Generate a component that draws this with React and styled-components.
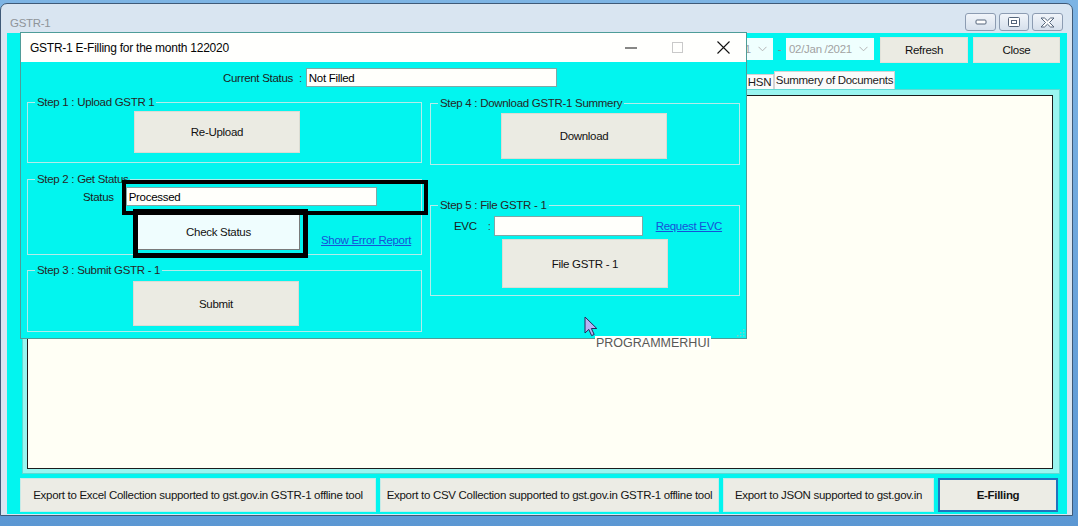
import React from "react";
import styled, { createGlobalStyle } from "styled-components";

const UI = `"Liberation Sans", Arial, sans-serif`;
const TIGHT = "-0.3px";

const GlobalStyle = createGlobalStyle`
  html, body {
    margin: 0;
    padding: 0;
  }
  body {
    width: 1078px;
    height: 526px;
    overflow: hidden;
    font-family: ${UI};
    font-size: 11.5px;
    letter-spacing: ${TIGHT};
    color: #1b1b1b;
    background: linear-gradient(180deg, #7db4e4 0%, #5b97d3 100%);
  }
`;

const Desktop = styled.div`
  position: relative;
  width: 1078px;
  height: 526px;
  padding-top: 3px;
  box-sizing: border-box;
`;

/* ---------- main window ---------- */

const MainWindow = styled.div`
  width: 1073px;
  height: 513px;
  box-sizing: border-box;
  border: 1px solid #3f5a78;
  border-radius: 7px 7px 0 0;
  background: #d9e5f1;
  display: flex;
  flex-direction: column;
`;

const TitleBar = styled.div`
  height: 29px;
  display: flex;
  align-items: flex-start;
  padding: 0 9px 0 9px;
`;

const WinTitle = styled.div`
  margin-top: 12px;
  font-size: 11.5px;
  line-height: 14px;
  color: #8f9499;
  flex: 1;
`;

const WinControls = styled.div`
  display: flex;
  gap: 3px;
  margin-top: 9px;
`;

const WinCtl = styled.div`
  width: ${(p) => p.$w}px;
  height: 18px;
  box-sizing: border-box;
  border: 1px solid #8c9cb2;
  border-radius: 3px;
  background: linear-gradient(180deg, #f1f5fa 0%, #d6e0ec 100%);
  display: flex;
  align-items: center;
  justify-content: center;
`;

const Client = styled.div`
  flex: 1;
  margin: 0 5px 1px 6px;
  background: #02f5ef;
  display: flex;
  flex-direction: column;
  padding: 4px 7px 2px 13px;
  min-height: 0;
`;

const TopRow = styled.div`
  height: 26px;
  display: flex;
  justify-content: flex-end;
  align-items: flex-start;
`;

const DatePicker = styled.div`
  width: 88px;
  height: 22px;
  margin-top: 1px;
  box-sizing: border-box;
  background: #effffe;
  color: #a2a2a2;
  white-space: nowrap;
  display: flex;
  align-items: center;
  justify-content: space-between;
  padding: 0 6px 0 3px;
`;

const Dash = styled.div`
  width: 13px;
  text-align: center;
  line-height: 24px;
  color: #8a8a8a;
`;

const ToolButton = styled.button`
  width: ${(p) => p.$w}px;
  height: 26px;
  margin-left: ${(p) => p.$ml}px;
  box-sizing: border-box;
  background: #ebebe3;
  border: 1px solid #e2e2da;
  font: 11.5px ${UI};
  letter-spacing: ${TIGHT};
  color: #111;
  padding: 0;
`;

const TabStrip = styled.div`
  height: 18px;
  margin-top: 8px;
  margin-left: 4px;
  display: flex;
  align-items: flex-end;
`;

const Tab = styled.div`
  width: ${(p) => p.$w}px;
  height: ${(p) => (p.$active ? 18 : 15)}px;
  box-sizing: border-box;
  background: #fbfbfb;
  border: 1px solid #d3d3d3;
  border-bottom: none;
  line-height: ${(p) => (p.$active ? 17 : 14)}px;
  text-align: center;
  white-space: nowrap;
  overflow: hidden;
  color: #1b1b1b;
`;

const Panel = styled.div`
  flex: 1;
  min-height: 0;
  margin-left: 2px;
  box-sizing: border-box;
  background: #9af5f0;
  border: 1px solid #5fdad3;
  padding: 5px 6px 4px 4px;
`;

const PanelBody = styled.div`
  height: 100%;
  box-sizing: border-box;
  background: #fffff5;
  border: 1px solid #1c1c1c;
`;

const BottomRow = styled.div`
  height: 34px;
  margin-top: 4px;
  margin-right: 2px;
  display: flex;
  gap: 4px;
`;

const ExportButton = styled.button`
  width: ${(p) => p.$w}px;
  height: 34px;
  box-sizing: border-box;
  background: #ececE5;
  border: ${(p) => (p.$primary ? "2px solid #2273bd" : "1px solid #c6ebe8")};
  font: ${(p) => (p.$primary ? "bold" : "normal")} 11.5px ${UI};
  letter-spacing: ${TIGHT};
  white-space: nowrap;
  color: #141414;
  padding: 0;
`;

/* ---------- dialog ---------- */

const Dialog = styled.div`
  position: absolute;
  left: 20px;
  top: 32px;
  width: 727px;
  height: 307px;
  box-sizing: border-box;
  border: 1px solid #4e9c98;
  background: #02f5ef;
  display: flex;
  flex-direction: column;
`;

const DialogTitle = styled.div`
  height: 29px;
  background: #fffffd;
  display: flex;
  align-items: center;
  padding-left: 9px;
`;

const DialogCaption = styled.div`
  flex: 1;
  font-size: 12px;
  letter-spacing: -0.25px;
  color: #050505;
`;

const DlgCtl = styled.div`
  width: 46px;
  height: 29px;
  display: flex;
  align-items: center;
  justify-content: center;
`;

const DialogBody = styled.div`
  flex: 1;
  position: relative;
  padding-top: 6px;
`;

const StatusLine = styled.div`
  height: 19px;
  display: flex;
  align-items: center;
  padding-left: ${(p) => p.$pl}px;
  margin-top: ${(p) => p.$mt || 0}px;
`;

const Label = styled.span`
  color: #1b1b1b;
  white-space: nowrap;
`;

const Colon = styled.span`
  margin-left: ${(p) => p.$ml}px;
  color: #444;
`;

const TextBox = styled.input`
  width: ${(p) => p.$w}px;
  height: ${(p) => p.$h || 19}px;
  margin: 0 0 0 ${(p) => p.$ml}px;
  box-sizing: border-box;
  border: 1px solid #7fa8a6;
  background: #fffffb;
  font: 11.5px ${UI};
  letter-spacing: ${TIGHT};
  color: #000;
  padding: 0 2px;
  outline: none;
`;

const Columns = styled.div`
  display: grid;
  grid-template-columns: 395px 310px;
  column-gap: 8px;
  margin: 8px 0 0 6px;
`;

const Column = styled.div`
  display: flex;
  flex-direction: column;
`;

const Group = styled.fieldset`
  box-sizing: border-box;
  height: ${(p) => p.$h}px;
  margin: ${(p) => p.$mt || 0}px 0 0 0;
  padding: 0;
  min-width: 0;
  border: 1px solid #b3ecea;
`;

const Legend = styled.legend`
  margin-left: 7px;
  padding: 0 2px;
  line-height: 14px;
  color: #262626;
`;

const ActionButton = styled.button`
  display: block;
  box-sizing: border-box;
  width: ${(p) => p.$w}px;
  height: ${(p) => p.$h}px;
  margin: ${(p) => p.$mt}px 0 0 ${(p) => p.$ml}px;
  background: ${(p) => (p.$focus ? "#effdfe" : "#ebebe3")};
  border: 1px solid ${(p) => (p.$focus ? "#7a7a7a" : "#dcdcd3")};
  font: 11.5px ${UI};
  letter-spacing: ${TIGHT};
  color: #111;
  padding: 0;
`;

const ButtonRow = styled.div`
  display: flex;
  align-items: flex-end;
`;

const Link = styled.a`
  margin: 0 0 ${(p) => p.$mb || 0}px ${(p) => p.$ml}px;
  color: #1652d8;
  text-decoration: underline;
  white-space: nowrap;
`;

const Grip = styled.svg`
  position: absolute;
  right: 1px;
  bottom: 1px;
`;

/* ---------- overlays ---------- */

const Marker = styled.div`
  position: absolute;
  left: ${(p) => p.$x}px;
  top: ${(p) => p.$y}px;
  width: ${(p) => p.$w}px;
  height: ${(p) => p.$h}px;
  box-sizing: border-box;
  border: ${(p) => p.$t}px solid #000;
`;

const Watermark = styled.div`
  position: absolute;
  left: 595px;
  top: 336px;
  padding: 0 1px;
  background: #fffffb;
  font: 12.5px ${UI};
  letter-spacing: 0;
  line-height: 14px;
  color: #585858;
`;

const Cursor = styled.svg`
  position: absolute;
  left: 584px;
  top: 316px;
`;

// tabs to the left of HSN sit under the dialog; only their frames are kept
const coveredTabs = [96, 92, 100, 104, 96, 92, 70, 71];

const Chevron = () => (
  <svg width="9" height="6" viewBox="0 0 9 6">
    <path d="M0.5 0.8 L4.5 4.8 L8.5 0.8" fill="none" stroke="#b4b4b4" strokeWidth="1" />
  </svg>
);

export default function App() {
  return (
    <>
      <GlobalStyle />
      <Desktop>
        <MainWindow>
          <TitleBar>
            <WinTitle>GSTR-1</WinTitle>
            <WinControls>
              <WinCtl $w={31}>
                <svg width="12" height="6" viewBox="0 0 12 6">
                  <rect x="1" y="1" width="10" height="4" rx="1" fill="#fff" stroke="#54657a" />
                </svg>
              </WinCtl>
              <WinCtl $w={30}>
                <svg width="12" height="10" viewBox="0 0 12 10">
                  <rect x="0.5" y="0.5" width="11" height="9" rx="1" fill="#fff" stroke="#54657a" />
                  <rect x="3.5" y="3.5" width="5" height="3" fill="none" stroke="#54657a" />
                </svg>
              </WinCtl>
              <WinCtl $w={31}>
                <svg width="15" height="11" viewBox="0 0 15 11">
                  <path
                    d="M1 1 H4.5 L7.5 3.8 L10.5 1 H14 L9.5 5.5 L14 10 H10.5 L7.5 7.2 L4.5 10 H1 L5.5 5.5 Z"
                    fill="#fff"
                    stroke="#54657a"
                    strokeWidth="1"
                    strokeLinejoin="round"
                  />
                </svg>
              </WinCtl>
            </WinControls>
          </TitleBar>

          <Client>
            <TopRow>
              <DatePicker>
                <span>01/Jan /2021</span>
                <Chevron />
              </DatePicker>
              <Dash>-</Dash>
              <DatePicker>
                <span>02/Jan /2021</span>
                <Chevron />
              </DatePicker>
              <ToolButton $w={88} $ml={6}>Refresh</ToolButton>
              <ToolButton $w={87} $ml={5}>Close</ToolButton>
            </TopRow>

            <TabStrip>
              {coveredTabs.map((w, i) => (
                <Tab key={i} $w={w} />
              ))}
              <Tab $w={29}>HSN</Tab>
              <Tab $w={121} $active>Summery of Documents</Tab>
            </TabStrip>

            <Panel>
              <PanelBody />
            </Panel>

            <BottomRow>
              <ExportButton $w={356}>
                Export to Excel Collection supported to gst.gov.in GSTR-1 offline tool
              </ExportButton>
              <ExportButton $w={339}>
                Export to CSV Collection supported to gst.gov.in GSTR-1 offline tool
              </ExportButton>
              <ExportButton $w={211}>Export to JSON supported to gst.gov.in</ExportButton>
              <ExportButton $w={120} $primary>E-Filling</ExportButton>
            </BottomRow>
          </Client>
        </MainWindow>

        <Dialog>
          <DialogTitle>
            <DialogCaption>GSTR-1 E-Filling for the month 122020</DialogCaption>
            <DlgCtl>
              <svg width="12" height="2" viewBox="0 0 12 2">
                <rect x="0" y="0.5" width="12" height="1" fill="#111" />
              </svg>
            </DlgCtl>
            <DlgCtl>
              <svg width="11" height="11" viewBox="0 0 11 11">
                <rect x="0.5" y="0.5" width="10" height="10" fill="none" stroke="#c9c9c9" />
              </svg>
            </DlgCtl>
            <DlgCtl>
              <svg width="13" height="13" viewBox="0 0 13 13">
                <path d="M0.5 0.5 L12.5 12.5 M12.5 0.5 L0.5 12.5" stroke="#111" strokeWidth="1.1" />
              </svg>
            </DlgCtl>
          </DialogTitle>

          <DialogBody>
            <StatusLine $pl={202}>
              <Label>Current Status</Label>
              <Colon $ml={6}>:</Colon>
              <TextBox $w={251} $ml={4} readOnly value="Not Filled" />
            </StatusLine>

            <Columns>
              <Column>
                <Group $h={68}>
                  <Legend>Step 1 : Upload GSTR 1</Legend>
                  <ActionButton $w={166} $h={42} $mt={2} $ml={106}>Re-Upload</ActionButton>
                </Group>

                <Group $h={83} $mt={9}>
                  <Legend>Step 2 : Get Status</Legend>
                  <StatusLine $pl={55} $mt={1}>
                    <Label>Status</Label>
                    <Colon $ml={9}>:</Colon>
                    <TextBox $w={251} $ml={0} readOnly value="Processed" />
                  </StatusLine>
                  <ButtonRow>
                    <ActionButton $w={163} $h={37} $mt={7} $ml={109} $focus>Check Status</ActionButton>
                    <Link href="#" $ml={21} $mb={4}>Show Error Report</Link>
                  </ButtonRow>
                </Group>

                <Group $h={69} $mt={8}>
                  <Legend>Step 3 : Submit GSTR - 1</Legend>
                  <ActionButton $w={166} $h={45} $mt={4} $ml={105}>Submit</ActionButton>
                </Group>
              </Column>

              <Column>
                <Group $h={69} $mt={1}>
                  <Legend>Step 4 : Download GSTR-1 Summery</Legend>
                  <ActionButton $w={166} $h={46} $mt={3} $ml={70}>Download</ActionButton>
                </Group>

                <Group $h={98} $mt={33}>
                  <Legend>Step 5 : File GSTR - 1</Legend>
                  <StatusLine $pl={23} $mt={4}>
                    <Label>EVC</Label>
                    <Colon $ml={11}>:</Colon>
                    <TextBox $w={149} $h={20} $ml={3} readOnly value="" />
                    <Link href="#" $ml={13}>Request EVC</Link>
                  </StatusLine>
                  <ActionButton $w={166} $h={49} $mt={4} $ml={71}>File GSTR - 1</ActionButton>
                </Group>
              </Column>
            </Columns>

            <Grip width="10" height="10" viewBox="0 0 10 10">
              <g fill="#7fcfcb">
                <rect x="8" y="2" width="1.5" height="1.5" />
                <rect x="5" y="5" width="1.5" height="1.5" />
                <rect x="8" y="5" width="1.5" height="1.5" />
                <rect x="2" y="8" width="1.5" height="1.5" />
                <rect x="5" y="8" width="1.5" height="1.5" />
                <rect x="8" y="8" width="1.5" height="1.5" />
              </g>
            </Grip>
          </DialogBody>
        </Dialog>

        <Marker $x={122} $y={180} $w={306} $h={35} $t={4} />
        <Marker $x={133} $y={209} $w={175} $h={49} $t={5} />

        <Watermark>PROGRAMMERHUI</Watermark>

        <Cursor width="15" height="21" viewBox="0 0 15 21">
          <path
            d="M1 1 L1 17 L4.8 13.4 L7.6 19.6 L10.2 18.5 L7.4 12.5 L12.8 12.5 Z"
            fill="#b7b3f4"
            stroke="#26265a"
            strokeWidth="1"
            strokeLinejoin="round"
          />
        </Cursor>
      </Desktop>
    </>
  );
}
